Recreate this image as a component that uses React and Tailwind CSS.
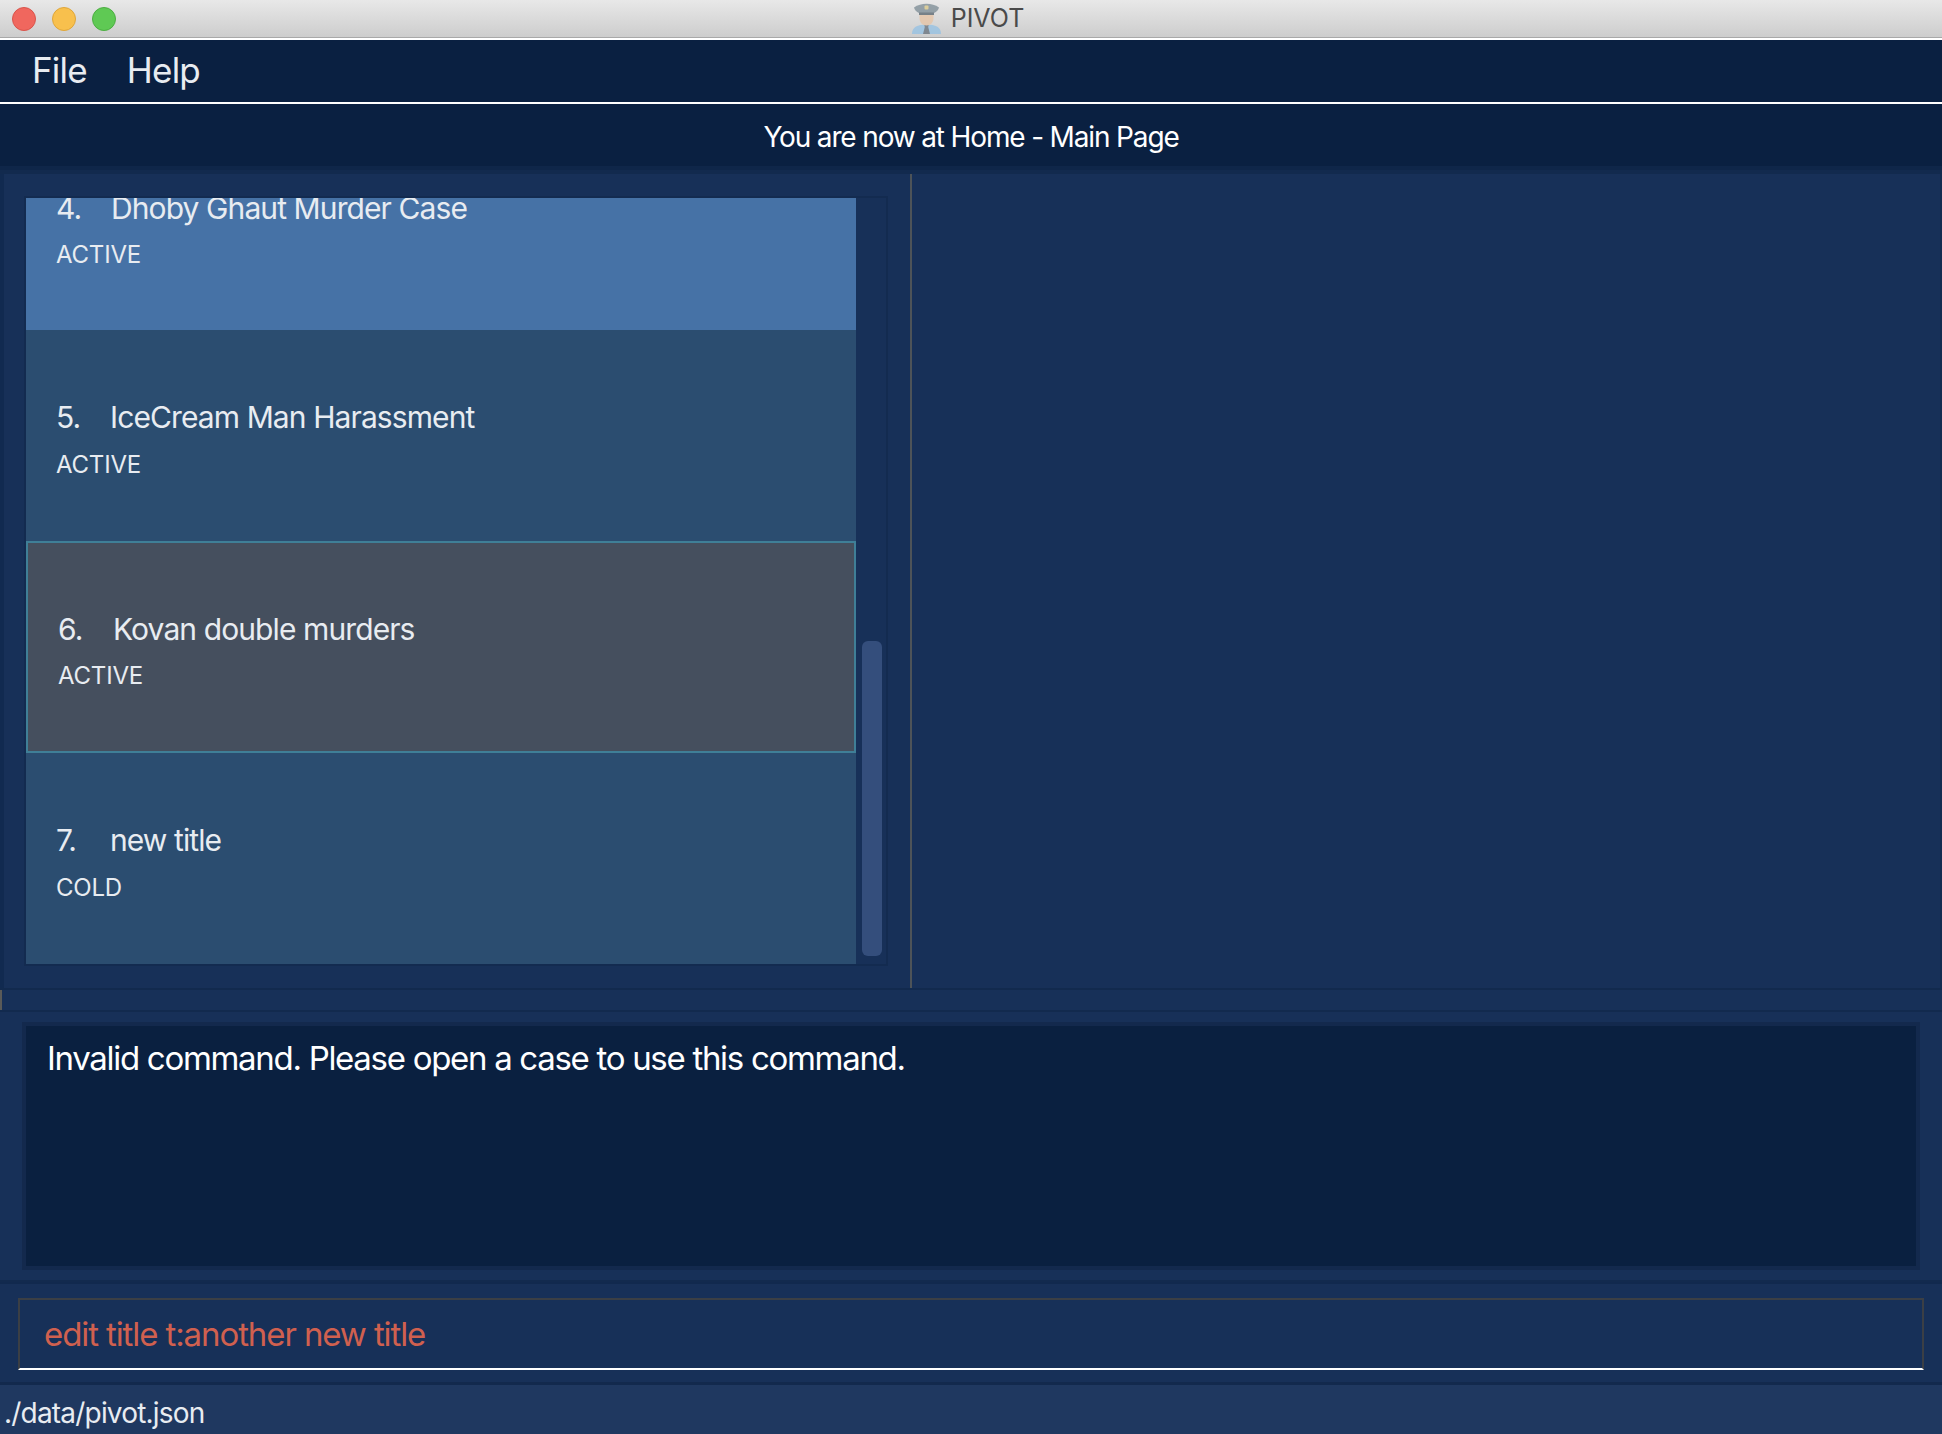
import React from 'react';

const cases = [
  { id: 5, title: 'IceCream Man Harassment', status: 'ACTIVE', gap: 'w-[54px]' },
  { id: 6, title: 'Kovan double murders', status: 'ACTIVE', gap: 'w-[55px]', selected: true },
  { id: 7, title: 'new title', status: 'COLD', gap: 'w-[54px]' },
];

// officer icon from the window title
const PoliceIcon = () => (
  <svg width="29" height="32" viewBox="0 0 29 32" className="opacity-70">
    <path d="M0 31c0-3 1-6 4-7.500 2.500-1.300 6-2 10.500-2s8 .7 10.500 2c3 1.500 4 4.500 4 7.500z" fill="#8fc0e6" />
    <path d="M12 21h5l-.8 3 1.800 7h-7l1.800-7z" fill="#5d6975" />
    <path d="M7.500 11h14v4c0 4.500-3 7.500-7 7.500s-7-3-7-7.500z" fill="#e8c2a0" />
    <path d="M2 4.500C5.500 2 10 .8 14.500.8S23.500 2 27 4.500c-.3 2-2.500 4.500-5 5.500H7C4.500 9 2.300 6.500 2 4.500z" fill="#74858f" />
    <rect x="7" y="9.500" width="15" height="2.500" fill="#4c5a64" />
    <rect x="12.500" y="2.500" width="4" height="4" rx="1" fill="#d9c67e" />
  </svg>
);

const CaseText = ({ gap, id, title, status }) => (
  <>
    <div className="flex items-center h-[36px] text-[30px] tracking-[-0.9px] text-[#e8ecf1]">
      <span className={gap}>{id}.</span>
      <span>{title}</span>
    </div>
    <div className="mt-[12px] h-[34px] leading-[34px] text-[24px] tracking-[-0.2px] text-[#e8ecf1]">{status}</div>
  </>
);

const CaseRow = ({ item }) => (
  <div
    className={`h-[211.5px] flex flex-col justify-center pt-[11px] ${
      item.selected ? 'bg-[#454f5e] border-2 border-[#3f7f97] pl-[30px]' : 'bg-[#2b4d70] pl-[30px]'
    }`}
  >
    <CaseText gap={item.gap} id={item.id} title={item.title} status={item.status} />
  </div>
);

export default function App() {
  return (
    <div className="w-[1942px] h-[1434px] flex flex-col overflow-hidden bg-[#173058] font-['Inter',sans-serif]">
      {/* title bar */}
      <div className="h-[38px] shrink-0 grid grid-cols-[1fr_auto_1fr] items-center bg-gradient-to-b from-[#e8e8e8] to-[#cdcdcd] border-b border-[#a8a8a8]">
        <div className="flex gap-[16px] pl-[12px]">
          <div className="w-[24px] h-[24px] rounded-full bg-[#f0675e] border border-[#d9544b]" />
          <div className="w-[24px] h-[24px] rounded-full bg-[#f8c04d] border border-[#dfa63a]" />
          <div className="w-[24px] h-[24px] rounded-full bg-[#5fc954] border border-[#4cae42]" />
        </div>
        <div className="flex items-center gap-[10px] pr-[6px]">
          <PoliceIcon />
          <span className="text-[25px] text-[#4a4a4a]">PIVOT</span>
        </div>
        <div />
      </div>

      {/* menu */}
      <div className="h-[66px] shrink-0 flex items-center gap-[40px] pl-[32px] pb-[2px] bg-[#0a2041] border-y-2 border-white text-[35px] tracking-[-0.8px] text-[#e8ecf1]">
        <span>File</span>
        <span>Help</span>
      </div>

      {/* page header */}
      <div className="h-[62px] shrink-0 flex items-center justify-center pt-[4px] bg-[#0a2041] text-[28px] tracking-[-1.15px] text-white">
        You are now at Home - Main Page
      </div>

      {/* list and detail */}
      <div className="h-[824px] shrink-0 flex flex-col">
        <div className="h-[4px] shrink-0 bg-[#0f2649]" />
        <div className="flex-1 flex min-h-0 border-t-[4px] border-b-[2px] border-[#122a4e]">
          <div className="w-[910px] shrink-0 pl-[20px] pt-[22px] border-l-[4px] border-[#112a50]">
            <div className="w-[864px] h-[770px] flex border-2 border-[#132b50]">
              <div className="w-[830px] h-[766px] overflow-hidden">
                <div className="h-[131.5px] pl-[30px] bg-[#4672a6] overflow-hidden">
                  <div className="-mt-[8px]">
                    <CaseText gap="w-[55px]" id={4} title="Dhoby Ghaut Murder Case" status="ACTIVE" />
                  </div>
                </div>
                {cases.map((c) => <CaseRow key={c.id} item={c} />)}
              </div>
              <div className="pl-[6px]">
                <div className="w-[20px] h-[315px] mt-[443px] rounded-[6px] bg-[#344e7c]" />
              </div>
            </div>
          </div>
          <div className="w-[2px] shrink-0 bg-[#4d5358]" />
          <div className="flex-1 border-r-2 border-[#132b50]" />
        </div>
      </div>

      {/* slim band between split and results */}
      <div className="h-[22px] shrink-0 border-b-2 border-[#122a4e]">
        <div className="w-[2px] h-[20px] bg-[#5a5a58]" />
      </div>

      {/* results */}
      <div className="h-[270px] shrink-0 px-[22px] py-[10px] border-b-2 border-[#122a4e]">
        <div className="h-full border-[4px] border-[#13294d] bg-[#0a2040] pl-[21px] pt-[10px] text-[33px] leading-[44px] tracking-[-1.3px] text-white">
          Invalid command. Please open a case to use this command.
        </div>
      </div>

      {/* command box */}
      <div className="h-[100px] shrink-0 px-[18px] pt-[14px] border-t-2 border-[#11294e]">
        <div className="h-[72px] flex items-center pl-[24px] pt-[1px] border-t-2 border-x-2 border-b-2 border-[#3b3f45] border-b-white text-[33px] tracking-[-1.1px] text-[#d0604f]">
          edit title t:another new title
        </div>
      </div>

      {/* status bar */}
      <div className="flex-1 flex items-center pl-[4px] pt-[6px] border-t-[3px] border-[#12294d] bg-[#1f3860] text-[28px] tracking-[-0.8px] text-[#e8ecf1]">
        ./data/pivot.json
      </div>
    </div>
  );
}
